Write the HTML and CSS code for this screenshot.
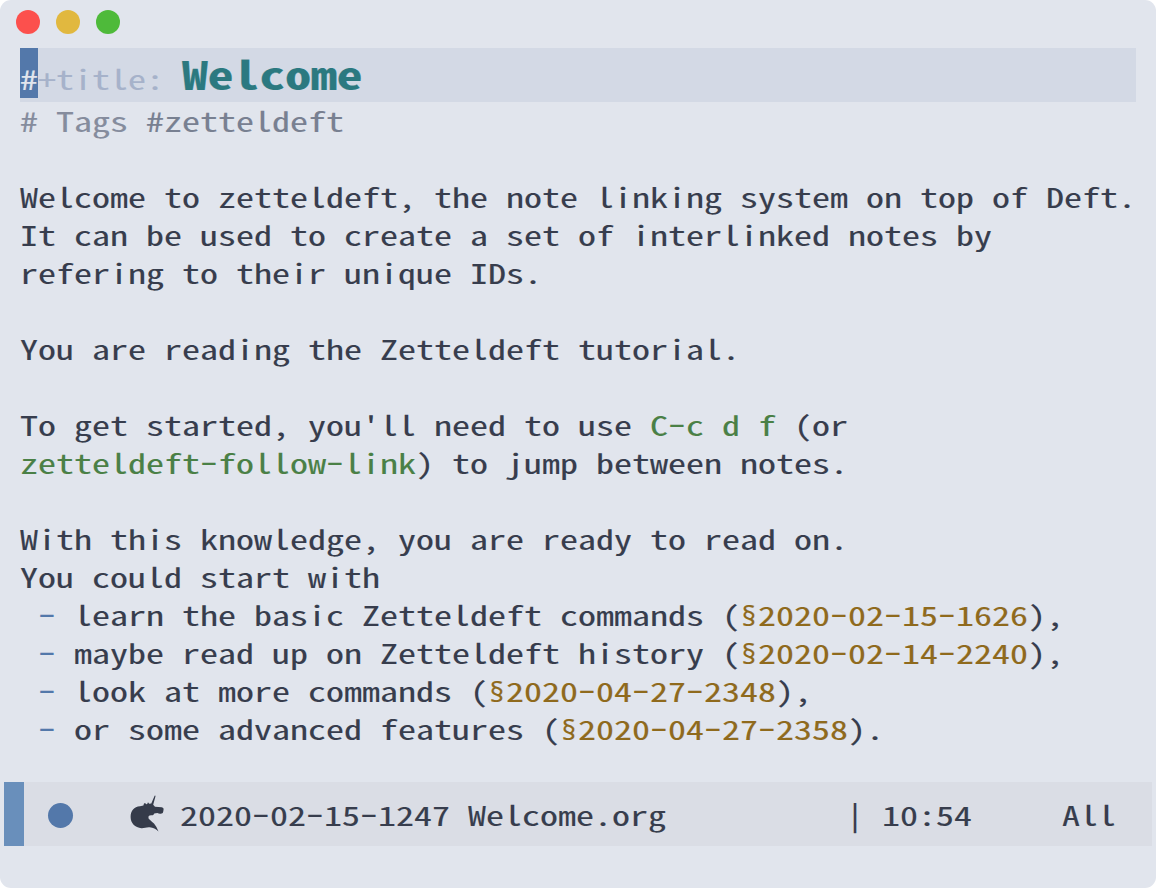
FILE: index.html
```html
<!DOCTYPE html>
<html lang="en">
<head>
<meta charset="utf-8">
<title>Welcome.org</title>
<link rel="stylesheet" href="styles.css">
</head>
<body>
<div class="window">
  <header class="titlebar">
    <span class="light close"></span><span class="light minimize"></span><span class="light maximize"></span>
  </header>
  <main class="buffer">
    <div class="current"><span class="cursor"><span class="line">#</span></span><span class="line keyword">+title: </span><span class="title">Welcome</span></div>
    <div class="line comment"># Tags <span class="tag">#zetteldeft</span></div>
    <div class="line"></div>
    <div class="line">Welcome to zetteldeft, the note linking system on top of Deft.</div>
    <div class="line">It can be used to create a set of interlinked notes by</div>
    <div class="line">refering to their unique IDs.</div>
    <div class="line"></div>
    <div class="line">You are reading the Zetteldeft tutorial.</div>
    <div class="line"></div>
    <div class="line">To get started, you'll need to use <span class="code">C<i>-</i>c d f</span> (or</div>
    <div class="line"><span class="code">zetteldeft<i>-</i>follow<i>-</i>link</span>) to jump between notes.</div>
    <div class="line"></div>
    <div class="line">With this knowledge, you are ready to read on.</div>
    <div class="line">You could start with</div>
    <div class="line"> <i class="bullet">-</i> learn the basic Zetteldeft commands (<span class="link"><b>§</b>2020<i>-</i>02<i>-</i>15<i>-</i>1626</span>),</div>
    <div class="line"> <i class="bullet">-</i> maybe read up on Zetteldeft history (<span class="link"><b>§</b>2020<i>-</i>02<i>-</i>14<i>-</i>2240</span>),</div>
    <div class="line"> <i class="bullet">-</i> look at more commands (<span class="link"><b>§</b>2020<i>-</i>04<i>-</i>27<i>-</i>2348</span>),</div>
    <div class="line"> <i class="bullet">-</i> or some advanced features (<span class="link"><b>§</b>2020<i>-</i>04<i>-</i>27<i>-</i>2358</span>).</div>
  </main>
  <footer class="modeline">
    <span class="state"></span>
    <svg class="unicorn" viewBox="0 0 34 37" aria-hidden="true">
      <path d="M24.6 .7Q25.5 .3 25.5 1.2L23.2 9.8 25 11.8 31.7 12.2Q34 12.5 33.6 14.5L33.2 16.8Q33 18.8 31.5 18.6 29 19.2 27.5 18 25.5 18 24.3 18.6 23.5 20 22.7 20.3 19.5 19.8 18.6 21.2 17.8 23.5 19.5 24.5C21 26 22.3 26.8 24 28.6Q27.2 32.5 28.5 36.5C26.2 34 23.8 33.2 21 32.5 17 31.6 14.5 33.4 11.5 33.2 5 32.8 .6 28 .6 22 .6 15.5 4 11.7 10 11.2L13.4 10.5 14 8.5 15.2 8 16 9.3 17.2 9 18 7.2 19.2 8.8 21.3 8.6Z"/>
    </svg>
    <span class="line file">2020<i>-</i>02<i>-</i>15<i>-</i>1247 Welcome.org</span>
    <span class="line time">| 10:54</span>
    <span class="line position">All</span>
  </footer>
</div>
</body>
</html>
```
FILE: styles.css
```css
body {
  margin: 0;
  background: #fff;
}

.window {
  display: flex;
  flex-direction: column;
  box-sizing: border-box;
  width: 1156px;
  height: 888px;
  border-radius: 11px;
  background: #e1e5ed;
  color: #373d4d;
  font: 36px "Noto Sans Mono CJK SC", "DejaVu Sans Mono", monospace;
  font-variant-ligatures: none;
  overflow: hidden;
}

.titlebar {
  display: flex;
  gap: 16px;
  height: 38px;
  padding: 10px 16px 0;
  box-sizing: border-box;
  margin-bottom: 10px;
}

.light {
  width: 24px;
  height: 24px;
  border-radius: 50%;
}

.close { background: #fc504d; }
.minimize { background: #e1b83f; }
.maximize { background: #4eba3a; }

.buffer {
  padding: 0 20px;
  height: 734px;
}

/* The tall, narrow face is flattened around its baseline to square proportions. */
.line {
  display: block;
  height: 38px;
  line-height: 38px;
  white-space: pre;
  transform: translateY(-5px) scaleY(.75);
  transform-origin: 0 35px;
  -webkit-text-stroke: .15px;
}

.current {
  display: flex;
  align-items: flex-start;
  height: 54px;
  background: #d3d9e5;
}

.cursor {
  width: 18px;
  height: 38px;
  padding-top: 12px;
  background: #5378aa;
  color: #e1e5ed;
}

.keyword {
  margin-top: 12px;
  color: #a6b2ca;
}

.title {
  color: #2b7980;
  font-size: 51.6px;
  font-weight: 700;
  line-height: 54px;
  transform: translateY(-7px) scaleY(.75);
  transform-origin: 0 49.5px;
  -webkit-text-stroke: .3px;
}

/* Wide dash filling one character cell. */
i {
  display: inline-block;
  width: 18px;
  font: normal 55px/26px "Noto Sans", sans-serif;
  transform: translateY(-4px) scaleY(.65);
  transform-origin: 0 34.7px;
  -webkit-text-stroke: 0;
}

b {
  display: inline-block;
  width: 18px;
  height: 38px;
  font: 28px/38px "Noto Sans", sans-serif;
  text-align: center;
  vertical-align: baseline;
  transform: scaleY(1.33);
  transform-origin: 0 29px;
}

.comment { color: #858c9d; }
.tag { color: #788091; }
.code { color: #4a8046; }
.bullet { color: #5378aa; }
.link { color: #8f6a1d; }

.modeline {
  display: flex;
  align-items: center;
  box-sizing: border-box;
  height: 64px;
  margin: 0 4px;
  padding: 2px 36px 0 24px;
  border-left: 20px solid #698fbb;
  background: #dadde5;
}

.state {
  width: 25px;
  height: 25px;
  border-radius: 50%;
  background: #5378aa;
}

.unicorn {
  width: 34px;
  height: 37px;
  margin: -3px 16px 0 57px;
  fill: #353b4a;
}

.time { margin-left: auto; }
.position { margin-left: 90px; }
```
